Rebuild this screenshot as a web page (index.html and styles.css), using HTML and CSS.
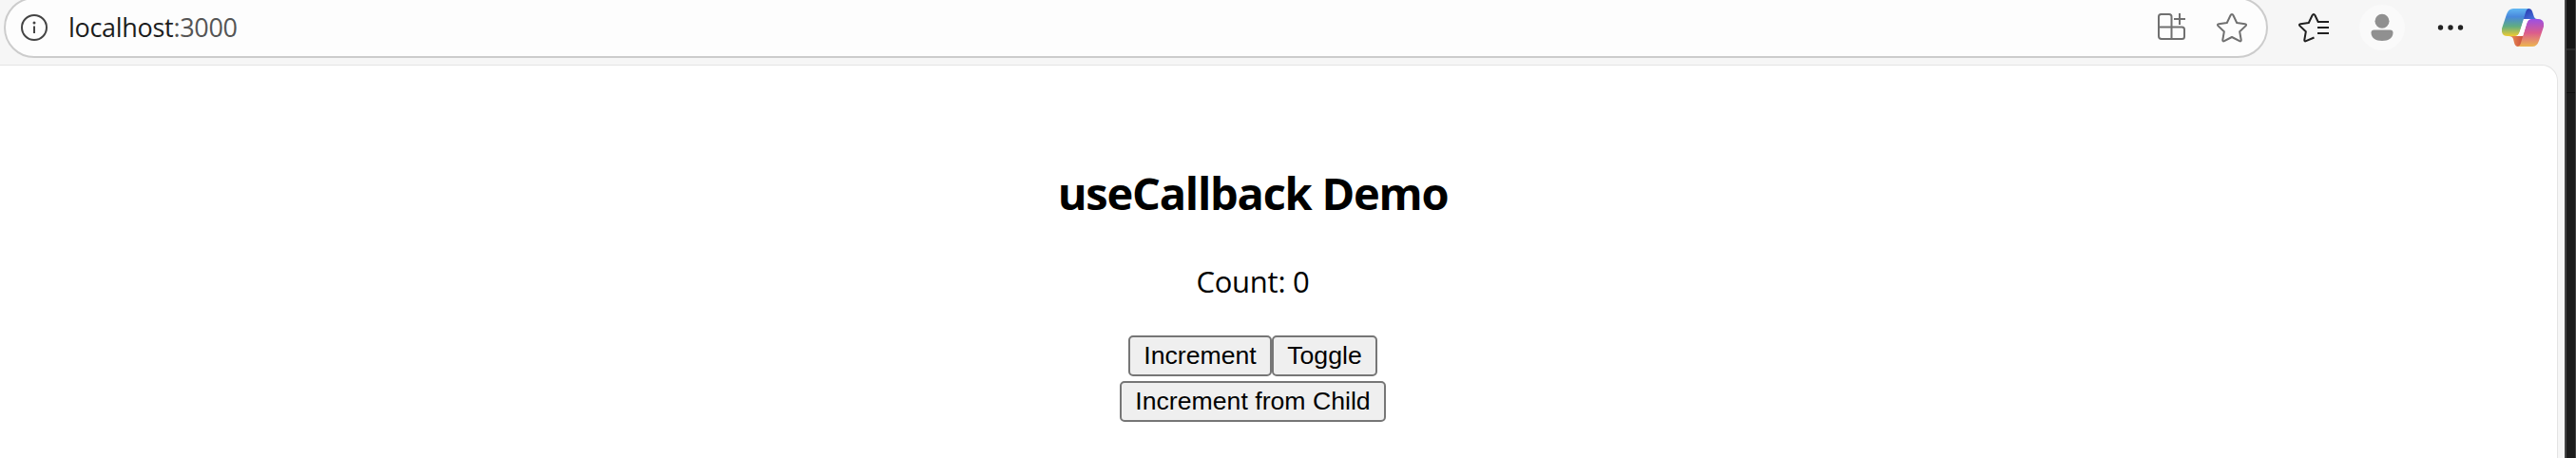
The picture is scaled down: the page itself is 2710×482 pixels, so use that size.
FILE: index.html
```html
<!DOCTYPE html>
<html lang="en">
<head>
<meta charset="utf-8">
<title>useCallback Demo</title>
<link rel="stylesheet" href="styles.css">
</head>
<body>
<div class="window">
  <header class="toolbar">
    <div class="address">
      <svg class="info" viewBox="0 0 30 30" fill="none" stroke="#444" stroke-width="2"><circle cx="15" cy="15" r="13"/><path d="M15 13.5v7.5"/><circle cx="15" cy="10" r="1.5" fill="#444" stroke="none"/></svg>
      <span class="url">localhost<span class="port">:3000</span></span>
      <svg class="apps" viewBox="0 0 32 32" fill="none" stroke="#707070" stroke-width="2"><path d="M4.500 2h7.500q2.500 0 2.500 2.500V28H4q-3 0-3-3V4.500Q1 2 3.500 2zM1 15.500h24.500q2.500 0 2.500 2.500v7.500q0 2.500-2.500 2.500H14M23 1v12M17 7h12"/></svg>
      <svg class="star" viewBox="0 0 34 34" fill="none" stroke="#707070" stroke-width="2" stroke-linejoin="round"><path d="M16 2q1 0 1.500 1.300l3.700 7.700 8.600 1.200q2 .4.800 1.900l-6.400 6.200 1.500 8.700q.2 2-1.700 1.200L16 26l-8 4.200q-1.900.8-1.700-1.200l1.500-8.700-6.400-6.200q-1.200-1.500.8-1.900l8.600-1.200 3.700-7.700Q15 2 16 2z"/></svg>
    </div>
    <svg class="favorites" viewBox="0 0 34 34" fill="none" stroke="#202020" stroke-width="2" stroke-linejoin="round"><path d="M16.500 26.500 8 30.200q-1.900.8-1.700-1.200l1.500-8.700-6.400-6.200q-1.200-1.500.8-1.900l8.600-1.200 3.700-7.700q1.500-2.600 3 0l3.200 6.700H32M20 16h12M20 22h12"/></svg>
    <svg class="profile" viewBox="0 0 48 48"><circle cx="24" cy="24" r="24" fill="#fafafa"/><g fill="#909090"><circle cx="24" cy="17.300" r="7.500"/><path d="M15.500 26.500h17q3 0 3 3c0 5-4.500 8.500-11.500 8.500s-11.500-3.500-11.500-8.500q0-3 3-3z"/></g></svg>
    <svg class="more" viewBox="0 0 28 8" fill="#222"><circle cx="3.500" cy="4" r="2.700"/><circle cx="14" cy="4" r="2.700"/><circle cx="24.500" cy="4" r="2.700"/></svg>
    <svg class="copilot" viewBox="0 0 44 40">
      <defs>
        <linearGradient id="cool" x1="0" y1="0" x2="0" y2="1"><stop offset="0" stop-color="#62b8f2"/><stop offset=".3" stop-color="#4888dc"/><stop offset=".65" stop-color="#61ad80"/><stop offset="1" stop-color="#efcb32"/></linearGradient>
        <linearGradient id="warm" x1="0" y1="0" x2="0" y2="1"><stop offset="0" stop-color="#9a50e5"/><stop offset=".5" stop-color="#dc5c8c"/><stop offset="1" stop-color="#edb650"/></linearGradient>
        <linearGradient id="blue" x1="0" y1="0" x2="1" y2="1"><stop offset="0" stop-color="#2430a8"/><stop offset="1" stop-color="#4a78e0"/></linearGradient>
        <linearGradient id="red" x1="0" y1="0" x2="1" y2="0"><stop offset="0" stop-color="#ee9955"/><stop offset="1" stop-color="#c5403a"/></linearGradient>
      </defs>
      <path fill="url(#blue)" d="M20 0h8q3 0 4 3l2 6q1 2 3 2H20z"/>
      <path fill="url(#red)" d="M7 29h18l-4 8q-1 3-4 3-3 0-4-4l-1-4q-1-3-5-3z"/>
      <path fill="#fff" d="M22 11h9l-6 18h-9z"/>
      <path fill="url(#cool)" d="M12 0h17q-3 0-4 4l-6 20q-1.500 5-5 5H6q-7 0-6-8L5 6q2-6 7-6z"/>
      <path fill="url(#warm)" d="M31 11h7q7 0 6 8l-5 15q-2 6-7 6H16q3 0 4-4l6-20q1.500-5 5-5z"/>
      <path fill="#fff" d="M27 11h4q-3.500 0-5 5l-3.500 11.500q-.5 1.500-2 1.500H14q3.500 0 5-5l3-9q1-4 5-4z"/>
    </svg>
  </header>
  <main class="page">
    <h2 class="title">useCallback Demo</h2>
    <p class="count">Count: 0</p>
    <div class="row"><button class="btn inc">Increment</button><button class="btn toggle">Toggle</button></div>
    <div class="row"><button class="btn child">Increment from Child</button></div>
  </main>
</div>
<aside class="edge"></aside>
</body>
</html>
```

FILE: styles.css
```css
* { box-sizing: border-box; }
body {
  margin: 0;
  height: 482px;
  display: flex;
  overflow: hidden;
  background: #f6f6f6;
  font-family: "Open Sans", "Noto Sans", sans-serif;
}
svg { display: block; flex: none; }
.window { width: 2698px; height: 482px; display: flex; flex-direction: column; }
.toolbar { height: 68px; display: flex; align-items: flex-start; flex: none; }
.address {
  width: 2382px;
  height: 64px;
  margin: -3px 0 0 4px;
  border: 2px solid #ccc;
  border-radius: 32px;
  background: #fdfdfd;
  display: flex;
  align-items: center;
  flex: none;
}
.info { width: 30px; height: 30px; margin-left: 15px; }
.url { margin-left: 21px; width: 182px; font-size: 27px; line-height: 40px; letter-spacing: -0.3px; color: #1c1c1c; white-space: nowrap; }
.port { color: #555; }
.apps { width: 32px; height: 32px; margin-left: auto; }
.star { width: 34px; height: 34px; margin: 1px 18px 0 30px; }
.favorites { width: 34px; height: 34px; margin: 13px 0 0 32px; }
.profile { width: 48px; height: 48px; margin: 5px 0 0 30px; }
.more { width: 28px; height: 8px; margin: 25px 0 0 34px; }
.copilot { width: 44px; height: 40px; margin: 9px 0 0 40px; }
.page {
  width: 2691px;
  flex: 1;
  padding: 99px 54px 0 0;
  border: solid #e4e4e4;
  border-width: 1px 1px 0 0;
  border-radius: 0 17px 0 0;
  background: #fff;
  color: #000;
  text-align: center;
}
.title { margin: 0; font-size: 47px; line-height: 70px; font-weight: 700; letter-spacing: -1.25px; }
.count { margin: 36px 0 35px; font-size: 31px; line-height: 44px; letter-spacing: -0.25px; }
.row { display: flex; justify-content: center; margin-bottom: 5px; }
.btn {
  height: 43px;
  padding: 0 0 2px;
  border: 2px solid #767676;
  border-radius: 5px;
  background: #efefef;
  color: #000;
  font: 26.67px/36px "Liberation Sans", Arial, sans-serif;
}
.inc { width: 151px; }
.toggle { width: 111px; }
.child { width: 280px; }
.edge { width: 12px; height: 482px; border: solid #444; border-width: 0 1px 0 2px; background: linear-gradient(#161616 0 51px, #2b2b2b 51px 53px, #1c1c1c 53px 97px, #101010 97px 98px, #1c1c1c 98px); }
```
